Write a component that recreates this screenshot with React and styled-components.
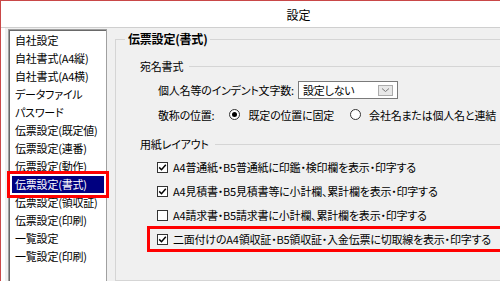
import React from 'react';
import styled, { createGlobalStyle } from 'styled-components';

const GlobalStyle = createGlobalStyle`
  html, body {
    margin: 0;
    padding: 0;
    overflow: hidden;
    background: #fff;
  }
  body {
    font-family: "Noto Sans CJK JP", "Noto Sans", sans-serif;
    font-size: 11px;
    font-feature-settings: "palt";
    letter-spacing: -0.2px;
    color: #000;
  }
`;

const Window = styled.div`
  width: 596px;
  height: 281px;
  box-sizing: border-box;
  border-top: 1px solid #c94848;
  border-left: 1px solid #c94848;
  background: #fff;
  display: flex;
  flex-direction: column;
  overflow: hidden;
`;

const TitleBar = styled.div`
  height: 26px;
  flex: none;
  display: flex;
  align-items: center;
  justify-content: center;
  border-bottom: 1px solid #cfcfcf;
  font-size: 12px;
  letter-spacing: 0;
`;

const Body = styled.div`
  flex: 1;
  display: flex;
  align-items: flex-start;
  margin-left: 4px;
  padding: 1px 0 0 3px;
  background: #f0f0f0;
  min-height: 0;
  overflow: hidden;
`;

const NavList = styled.ul`
  list-style: none;
  margin: 0;
  padding: 1px 0 0 1px;
  width: 99px;
  height: 270px;
  flex: none;
  box-sizing: border-box;
  background: #fff;
  border: 1px solid #a0a0a0;
  box-shadow: inset 1px 1px 0 #696969;
`;

const NavItem = styled.li`
  height: 17px;
  line-height: 17px;
  margin: 1px 2px;
  padding: 0 3px;
  white-space: nowrap;
  background: ${(p) => (p.$selected ? '#000080' : 'transparent')};
  color: ${(p) => (p.$selected ? '#fff' : '#000')};
  outline: ${(p) => (p.$selected ? '3px solid #f00' : 'none')};
  outline-offset: 2px;
`;

const Group = styled.fieldset`
  margin: 2px 0 0 8px;
  padding: 0;
  width: 470px;
  height: 250px;
  min-width: 0;
  box-sizing: border-box;
  border: 1px solid #d5d5d5;
`;

const GroupTitle = styled.legend`
  font-weight: bold;
  font-size: 12px;
  line-height: 16px;
  padding: 0 3px;
  margin-left: 9px;
`;

const GroupContent = styled.div`
  padding-left: 24px;
`;

const SectionHeader = styled.div`
  display: flex;
  align-items: center;
  height: 16px;
  margin-top: ${(p) => p.$top}px;
`;

const SectionLine = styled.div`
  flex: 1;
  height: 1px;
  margin: 0 12px 0 6px;
  background: #d5d5d5;
`;

const FieldRows = styled.div`
  margin-top: 3px;
  padding-left: 18px;
`;

const FieldRow = styled.div`
  display: flex;
  align-items: center;
  height: 25px;
  white-space: nowrap;
`;

const FieldLabel = styled.span`
  min-width: ${(p) => p.$width || 0}px;
`;

const Select = styled.div`
  position: relative;
  width: 100px;
  height: 18px;
  box-sizing: border-box;
  border: 1px solid #7a7a7a;
  background: #fff;
  display: flex;
  align-items: center;
  padding-left: 4px;
`;

const SelectArrow = styled.div`
  position: absolute;
  right: 4px;
  top: 3px;
  width: 15px;
  height: 11px;
  box-sizing: border-box;
  border: 1px solid #acacac;
  background: #e8e8e8;
  display: flex;
  align-items: center;
  justify-content: center;
`;

const RadioGroup = styled.div`
  display: flex;
  align-items: center;
  margin-left: 15px;
`;

const RadioOption = styled.label`
  display: flex;
  align-items: center;
  gap: 8px;
  margin-right: 16px;
`;

const RadioCircle = styled.span`
  width: 11px;
  height: 11px;
  box-sizing: border-box;
  border: 1px solid #333;
  border-radius: 50%;
  background: #fff;
  display: flex;
  align-items: center;
  justify-content: center;

  &::after {
    content: '';
    width: 5px;
    height: 5px;
    border-radius: 50%;
    background: ${(p) => (p.$checked ? '#000' : 'transparent')};
  }
`;

const CheckList = styled.div`
  margin-top: 3px;
  padding-left: 8px;
`;

const CheckRow = styled.label`
  display: flex;
  align-items: center;
  gap: 5px;
  width: fit-content;
  height: 24px;
  padding: 0 13px 0 9px;
  white-space: nowrap;
  outline: ${(p) => (p.$highlight ? '3px solid #f00' : 'none')};
  outline-offset: -2px;
`;

const CheckBox = styled.span`
  width: 11px;
  height: 11px;
  flex: none;
  box-sizing: border-box;
  border: 1px solid #333;
  background: #fff;
  display: flex;
  align-items: center;
  justify-content: center;
`;

const navItems = [
  '自社設定',
  '自社書式(A4縦)',
  '自社書式(A4横)',
  'データファイル',
  'パスワード',
  '伝票設定(既定値)',
  '伝票設定(連番)',
  '伝票設定(動作)',
  '伝票設定(書式)',
  '伝票設定(領収証)',
  '伝票設定(印刷)',
  '一覧設定',
  '一覧設定(印刷)',
];

const layoutOptions = [
  { label: 'A4普通紙・B5普通紙に印鑑・検印欄を表示・印字する', checked: true },
  { label: 'A4見積書・B5見積書等に小計欄、累計欄を表示・印字する', checked: true },
  { label: 'A4請求書・B5請求書に小計欄、累計欄を表示・印字する', checked: false },
  {
    label: '二面付けのA4領収証・B5領収証・入金伝票に切取線を表示・印字する',
    checked: true,
    highlight: true,
  },
];

const CheckMark = () => (
  <svg width="9" height="9" viewBox="0 0 9 9">
    <path d="M1.2 4.4 L3.5 6.7 L7.8 1.8" fill="none" stroke="#000" strokeWidth="1.5" />
  </svg>
);

const Chevron = () => (
  <svg width="9" height="6" viewBox="0 0 9 6">
    <path d="M1 1.5 L4.5 4.5 L8 1.5" fill="none" stroke="#7a7a7a" strokeWidth="1" />
  </svg>
);

const App = () => (
  <>
    <GlobalStyle />
    <Window>
      <TitleBar>設定</TitleBar>
      <Body>
        <NavList>
          {navItems.map((item) => (
            <NavItem key={item} $selected={item === '伝票設定(書式)'}>
              {item}
            </NavItem>
          ))}
        </NavList>
        <Group>
          <GroupTitle>伝票設定(書式)</GroupTitle>
          <GroupContent>
            <SectionHeader $top={11}>
              宛名書式
              <SectionLine />
            </SectionHeader>
            <FieldRows>
              <FieldRow>
                <FieldLabel $width={140}>個人名等のインデント文字数:</FieldLabel>
                <Select>
                  設定しない
                  <SelectArrow>
                    <Chevron />
                  </SelectArrow>
                </Select>
              </FieldRow>
              <FieldRow>
                <FieldLabel>敬称の位置:</FieldLabel>
                <RadioGroup>
                  <RadioOption>
                    <RadioCircle $checked />
                    既定の位置に固定
                  </RadioOption>
                  <RadioOption>
                    <RadioCircle />
                    会社名または個人名と連結
                  </RadioOption>
                </RadioGroup>
              </FieldRow>
            </FieldRows>
            <SectionHeader $top={9}>
              用紙レイアウト
              <SectionLine />
            </SectionHeader>
            <CheckList>
              {layoutOptions.map((opt) => (
                <CheckRow key={opt.label} $highlight={opt.highlight}>
                  <CheckBox>{opt.checked && <CheckMark />}</CheckBox>
                  {opt.label}
                </CheckRow>
              ))}
            </CheckList>
          </GroupContent>
        </Group>
      </Body>
    </Window>
  </>
);

export default App;
